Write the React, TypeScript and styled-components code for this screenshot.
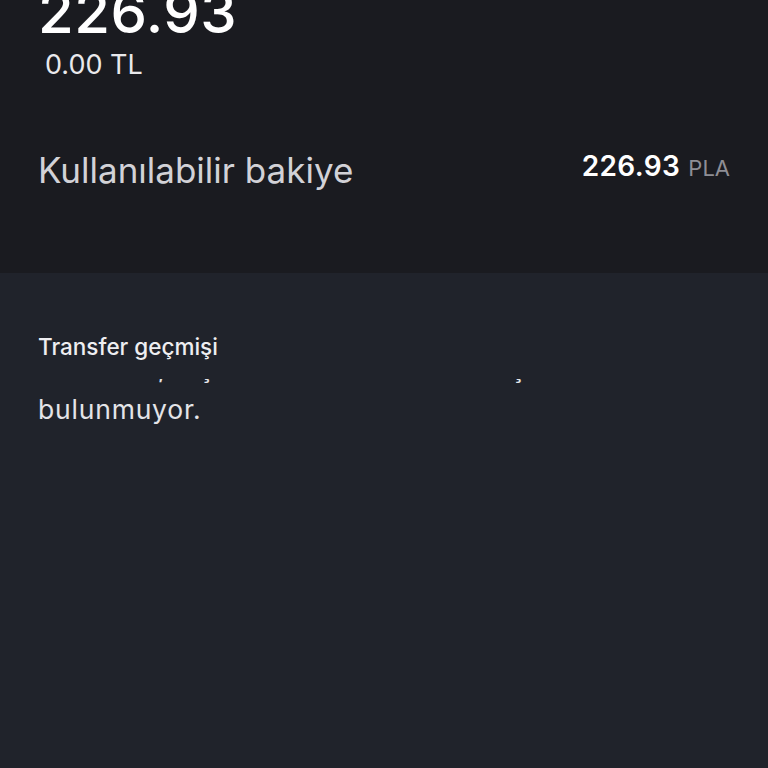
import React from "react";
import styled, { createGlobalStyle } from "styled-components";

const GlobalStyle = createGlobalStyle`
  html, body {
    margin: 0;
    padding: 0;
    background: #20232b;
  }
  body {
    font-family: Inter, "Noto Sans", "DejaVu Sans", sans-serif;
    -webkit-font-smoothing: antialiased;
    overflow: hidden;
  }
  * { box-sizing: border-box; }
`;

const Page = styled.div`
  display: flex;
  flex-direction: column;
  min-height: 768px;
  overflow: hidden;
`;

const BalanceSection = styled.section`
  background: #1a1b20;
  padding: 0 38px;
  height: 273px;
  display: flex;
  flex-direction: column;
`;

const Amount = styled.div`
  margin-top: -23px;
  font-size: 58px;
  line-height: 70px;
  font-weight: 500;
  color: #ffffff;
  letter-spacing: 0.5px;
`;

const Fiat = styled.div`
  padding-left: 7px;
  font-size: 27px;
  line-height: 36px;
  color: #e9e9ec;
`;

const AvailableRow = styled.div`
  margin-top: 66px;
  display: flex;
  justify-content: space-between;
  align-items: flex-start;
`;

const AvailableLabel = styled.span`
  font-size: 35px;
  line-height: 42px;
  color: #d2d2d7;
`;

const AvailableValue = styled.span`
  display: flex;
  align-items: baseline;
  gap: 8px;
  line-height: 35px;
`;

const ValueNumber = styled.span`
  font-size: 28px;
  font-weight: 600;
  letter-spacing: 0.4px;
  color: #ffffff;
`;

const ValueUnit = styled.span`
  font-size: 22px;
  color: #8e8e95;
`;

const HistorySection = styled.section`
  flex: 1;
  background: #20232b;
  padding: 0 38px;
  display: flex;
  flex-direction: column;
`;

const HistoryTitle = styled.h2`
  position: relative;
  z-index: 1;
  margin: 0;
  padding-top: 57px;
  padding-bottom: 15px;
  background: #20232b;
  font-size: 22.5px;
  line-height: 34px;
  font-weight: 500;
  color: #eeeef1;
`;

const EmptyMessage = styled.p`
  margin: -31px 0 0;
  max-width: 660px;
  font-size: 26.5px;
  line-height: 41px;
  letter-spacing: 0.8px;
  color: #e4e4e8;
`;

export default function App() {
  return (
    <>
      <GlobalStyle />
      <Page>
        <BalanceSection>
          <Amount>226.93</Amount>
          <Fiat>0.00 TL</Fiat>
          <AvailableRow>
            <AvailableLabel>Kullanılabilir bakiye</AvailableLabel>
            <AvailableValue>
              <ValueNumber>226.93</ValueNumber>
              <ValueUnit>PLA</ValueUnit>
            </AvailableValue>
          </AvailableRow>
        </BalanceSection>
        <HistorySection>
          <HistoryTitle>Transfer geçmişi</HistoryTitle>
          <EmptyMessage>
            Maalesef, hiç tamamlanan transfer işleminiz bulunmuyor.
          </EmptyMessage>
        </HistorySection>
      </Page>
    </>
  );
}
